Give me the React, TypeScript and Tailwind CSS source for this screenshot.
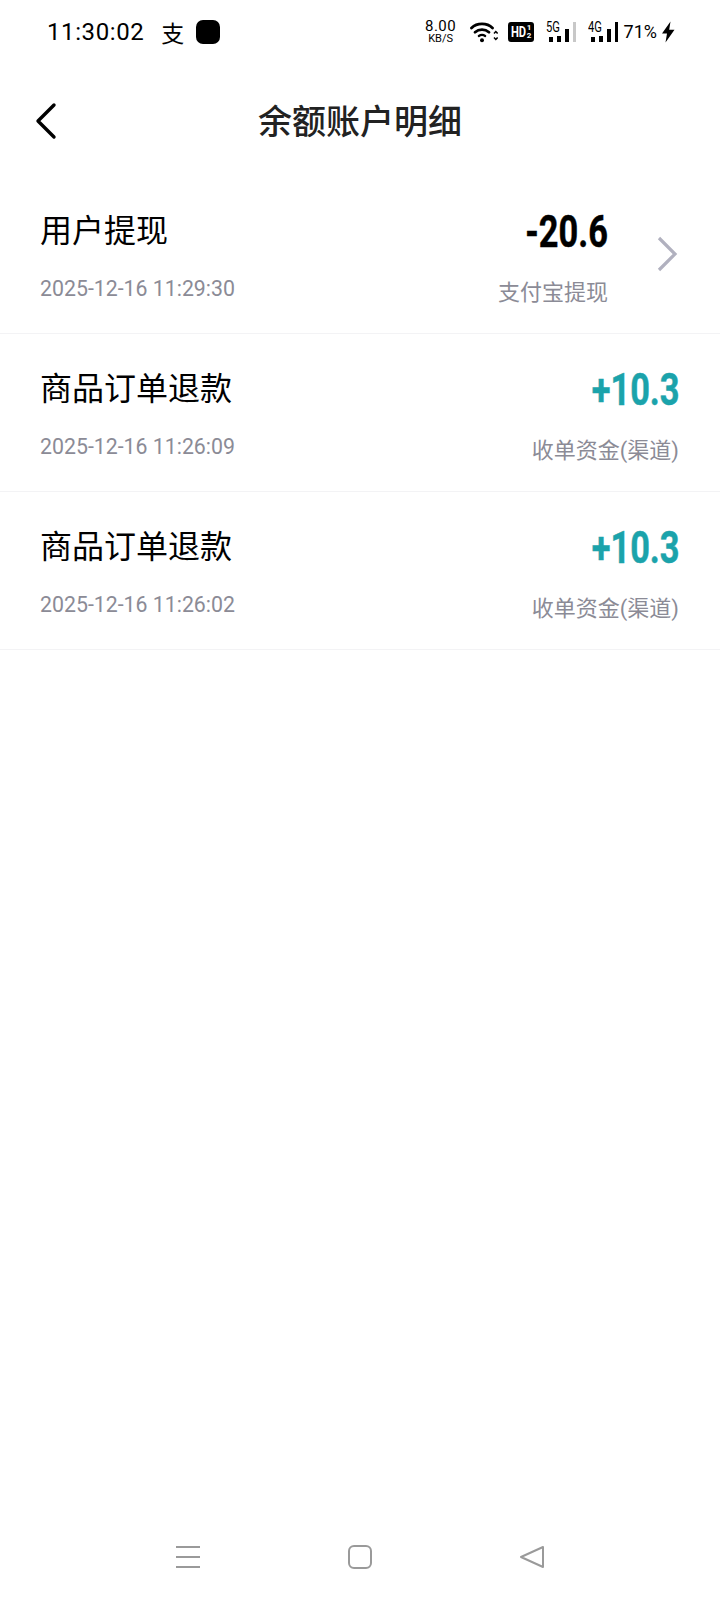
const cjk = "font-['Roboto','Noto_Sans_CJK_SC',sans-serif]";

function Bars({ label, last }: { label: string; last: string }) {
  return (
    <div className="relative w-[30px] h-[20px]">
      <span className="absolute left-0 top-[-1px] text-[14px] leading-[12px] font-['Roboto',sans-serif] scale-x-[0.8] origin-left text-black">
        {label}
      </span>
      <div className="absolute right-0 bottom-0 flex items-end gap-[4px]">
        <div className="w-[4px] h-[5px] bg-black" />
        <div className="w-[4px] h-[6px] bg-black" />
        <div className="w-[4px] h-[13px] bg-black" />
        <div className={`w-[3px] h-[20px] ${last}`} />
      </div>
    </div>
  );
}

function StatusBar() {
  return (
    <div className="flex items-center h-[64px] pl-[47px] pr-[45px] text-black">
      <span className="text-[24px] leading-none font-['Roboto',sans-serif] tracking-[0.6px]">11:30:02</span>
      <span className="ml-[17px] w-[25px] text-[23px] leading-none font-['Noto_Sans_CJK_SC',sans-serif]">支</span>
      <div className="ml-[10px] w-[24px] h-[24px] rounded-[7px] bg-black" />
      <div className="ml-auto flex items-center">
        <div className="flex flex-col items-center w-[34px] font-['Roboto',sans-serif]">
          <span className="text-[15px] leading-[14px] tracking-[0.5px]">8.00</span>
          <span className="text-[11px] leading-[12px]">KB/S</span>
        </div>
        <svg className="ml-[12px]" width="28" height="22" viewBox="0 0 28 22" fill="none" stroke="black" strokeWidth="2.8" strokeLinecap="round">
          <path d="M1.5 7C7 1.6 17 1.6 22.5 7" />
          <path d="M5 11.2C9 7.8 15 7.8 19 11.2" />
          <path d="M8.8 15C10.6 13.8 13.4 13.8 15.2 15" strokeWidth="2.2" />
          <circle cx="12" cy="19.2" r="2" fill="black" stroke="none" />
          <path d="M24 12.5l1.8-2 1.8 2M24 16.5l1.8 2 1.8-2" strokeWidth="1.5" strokeLinecap="butt" />
        </svg>
        <div className="ml-[10px] flex items-center justify-center w-[26px] h-[20px] rounded-[3px] bg-black text-white font-['Roboto',sans-serif] font-bold">
          <span className="text-[14px] leading-none scale-x-[0.8] -mx-[1px]">HD</span>
          <span className="flex flex-col text-[8px] leading-[8px]">
            <span>1</span>
            <span>2</span>
          </span>
        </div>
        <div className="ml-[12px]">
          <Bars label="5G" last="bg-[#c8c8c8]" />
        </div>
        <div className="ml-[12px]">
          <Bars label="4G" last="bg-black" />
        </div>
        <span className="ml-[6px] text-[18px] leading-none font-['Roboto',sans-serif]">71%</span>
        <svg className="ml-[4px]" width="14" height="22" viewBox="0 0 14 22">
          <path d="M9.5 0.5L1 12.5h5L4.5 21.5 13.5 8.8H8.2L9.5 0.5Z" fill="black" />
        </svg>
      </div>
    </div>
  );
}

function Header() {
  return (
    <div className="relative flex items-center justify-center h-[112px] text-[#222222]">
      <svg className="absolute left-[34px] top-[38px]" width="24" height="38" viewBox="0 0 24 38" fill="none" stroke="black" strokeWidth="3.4" strokeLinecap="round" strokeLinejoin="round">
        <path d="M20 3L4 19l16 16" />
      </svg>
      <h1 className={`pt-[3px] text-[34px] leading-none ${cjk} font-medium`}>余额账户明细</h1>
    </div>
  );
}

type Row = { title: string; time: string; amount: string; sub: string; tone: string; arrow?: boolean };

const rows: Row[] = [
  { title: "用户提现", time: "2025-12-16 11:29:30", amount: "-20.6", sub: "支付宝提现", tone: "text-black", arrow: true },
  { title: "商品订单退款", time: "2025-12-16 11:26:09", amount: "+10.3", sub: "收单资金(渠道)", tone: "text-[#1ba3ab]" },
  { title: "商品订单退款", time: "2025-12-16 11:26:02", amount: "+10.3", sub: "收单资金(渠道)", tone: "text-[#1ba3ab]" },
];

function Record({ row }: { row: Row }) {
  return (
    <div className="flex items-center h-[158px] pl-[40px] pr-[41px] border-b border-[#f3f3f5]">
      <div className="flex flex-col pt-[4px]">
        <span className={`text-[32px] leading-[40px] text-black ${cjk}`}>{row.title}</span>
        <span className="mt-[25px] text-[21.3px] leading-[26px] text-[#8b8b96] font-['Roboto',sans-serif]">{row.time}</span>
      </div>
      <div className="ml-auto flex flex-col items-end pt-[6px]">
        <span className={`text-[44px] leading-[46px] font-bold font-['Roboto',sans-serif] scale-x-[0.78] origin-right [-webkit-text-stroke:0.5px] ${row.tone}`}>
          {row.amount}
        </span>
        <span className={`mt-[24px] text-[22px] leading-[28px] text-[#8b8b96] ${cjk}`}>{row.sub}</span>
      </div>
      {row.arrow && (
        <svg className="ml-[48px] mb-[2px] mr-[1px]" width="22" height="36" viewBox="0 0 22 36" fill="none" stroke="#b1b1bf" strokeWidth="3.2">
          <path d="M3 2l16 16L3 34" />
        </svg>
      )}
    </div>
  );
}

function NavBar() {
  return (
    <div className="mt-auto flex items-center justify-center gap-[148px] h-[34px] mb-[26px]">
      <svg width="24" height="24" viewBox="0 0 24 24" stroke="#9a9a9a" strokeWidth="2">
        <path d="M0 2h24M0 12h24M0 22h24" />
      </svg>
      <svg width="24" height="24" viewBox="0 0 24 24" fill="none" stroke="#9a9a9a" strokeWidth="2">
        <rect x="1" y="1" width="22" height="22" rx="5" />
      </svg>
      <svg width="24" height="24" viewBox="0 0 24 24" fill="none" stroke="#9a9a9a" strokeWidth="2" strokeLinejoin="round">
        <path d="M23 2v20L1 12Z" />
      </svg>
    </div>
  );
}

export default function App() {
  return (
    <div className="flex flex-col w-[720px] h-[1600px] bg-white overflow-hidden">
      <StatusBar />
      <Header />
      <div className="flex flex-col">
        {rows.map((row, i) => (
          <Record key={i} row={row} />
        ))}
      </div>
      <NavBar />
    </div>
  );
}
